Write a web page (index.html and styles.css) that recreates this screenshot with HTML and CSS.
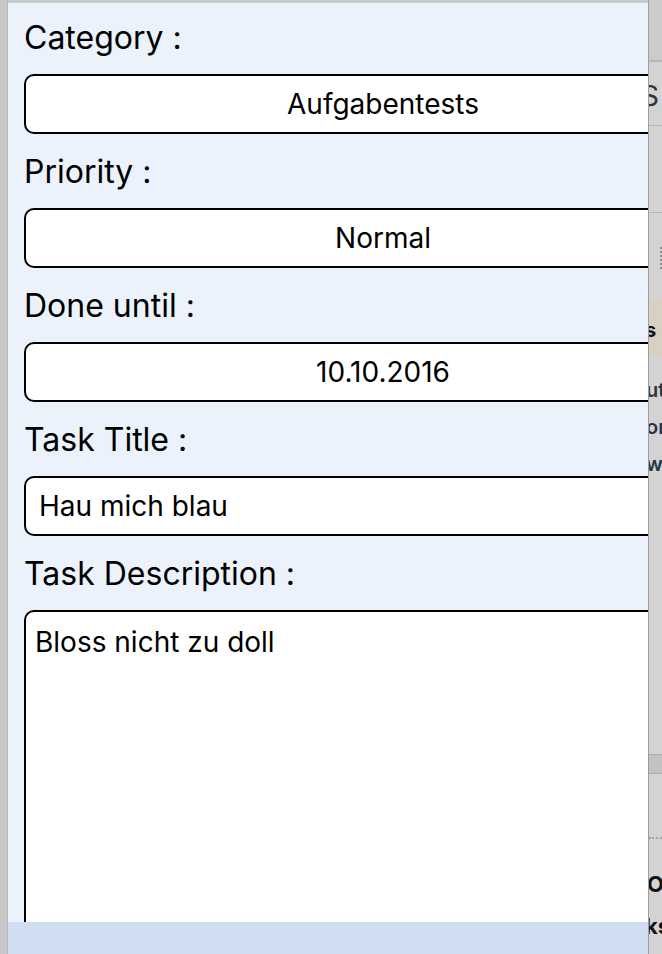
FILE: index.html
```html
<!DOCTYPE html>
<html lang="de">
<head>
    <meta charset="UTF-8">
    <meta name="viewport" content="width=device-width, initial-scale=1.0">
    <title>Task bearbeiten</title>
    <link rel="stylesheet" href="styles.css">
</head>
<body>
    <div class="screen">
        <div class="edge-left"></div>

        <div class="sheet">
            <form class="task-form" id="taskForm">
                <div class="field">
                    <label class="field-label" for="category">Category :</label>
                    <input class="field-box centered" type="text" id="category" value="Aufgabentests" readonly>
                </div>
                <div class="field">
                    <label class="field-label" for="priority">Priority :</label>
                    <input class="field-box centered" type="text" id="priority" value="Normal" readonly>
                </div>
                <div class="field">
                    <label class="field-label" for="doneUntil">Done until :</label>
                    <input class="field-box centered" type="text" id="doneUntil" value="10.10.2016" readonly>
                </div>
                <div class="field">
                    <label class="field-label" for="taskTitle">Task Title :</label>
                    <input class="field-box" type="text" id="taskTitle" value="Hau mich blau">
                </div>
                <div class="field">
                    <label class="field-label" for="taskDescription">Task Description :</label>
                    <textarea class="field-box area" id="taskDescription">Bloss nicht zu doll</textarea>
                </div>
            </form>
            <div class="sheet-footer"></div>
        </div>

        <div class="behind">
            <div class="behind-top"></div>
            <div class="behind-row tall"><span class="peek big">S</span></div>
            <div class="behind-row mid"></div>
            <div class="behind-row dots"><span class="dot-col"></span></div>
            <div class="behind-row beige"><span class="peek bold">s</span></div>
            <div class="behind-text">
                <span class="peek small cut">ut</span>
                <span class="peek small cut">or</span>
                <span class="peek small cut">wo</span>
            </div>
            <div class="behind-band"></div>
            <div class="behind-lower">
                <div class="dotted"></div>
                <span class="peek bold2 first">O</span>
                <span class="peek bold2 cut">ks</span>
                <span class="peek bold2 last">e</span>
            </div>
        </div>
    </div>
</body>
</html>
```

FILE: styles.css
```css
html, body {
    margin: 0;
    padding: 0;
}
body {
    font-family: 'Inter', 'Liberation Sans', sans-serif;
    background-color: #c9c9c9;
    color: #000;
    overflow: hidden;
}
.screen {
    display: flex;
    height: 954px;
    width: 662px;
}
.edge-left {
    width: 7px;
    background: #c9c9c9;
    border-right: 1px solid #b8b8b8;
}
.sheet {
    width: 640px;
    margin-top: 3px;
    display: flex;
    flex-direction: column;
    background: #ebf2fb;
    overflow: hidden;
}
.task-form {
    flex: 1;
    overflow: hidden;
    padding: 15px 0 0 16px;
}
.field {
    margin-bottom: 18px;
}
.field-label {
    display: block;
    font-size: 32px;
    line-height: 40px;
    margin-bottom: 16px;
    white-space: nowrap;
}
.field-box {
    display: block;
    box-sizing: border-box;
    width: 718px;
    height: 60px;
    border: 2px solid #000;
    border-radius: 10px;
    background: #fff;
    font-family: 'Inter', 'Liberation Sans', sans-serif;
    font-size: 28px;
    color: #000;
    padding: 0 13px;
    outline: none;
}
.centered {
    text-align: center;
}
.area {
    height: 360px;
    padding: 12px 9px;
    line-height: 36px;
    resize: none;
}
.sheet-footer {
    height: 32px;
    background: #cfdef0;
}

/* page behind the sheet */
.behind {
    width: 13px;
    border-left: 1px solid #9e9e9e;
    background: #d3d3d3;
    overflow: hidden;
    color: #2b3441;
}
.behind-top {
    height: 60px;
    background: #cbcbcb;
    border-bottom: 2px solid #b6b6b6;
}
.behind-row {
    display: flow-root;
    border-bottom: 1px solid #b6b6b6;
}
.behind-row.tall {
    height: 63px;
}
.behind-row.mid {
    height: 86px;
}
.behind-row.dots {
    height: 87px;
    border-bottom: none;
}
.dot-col {
    display: block;
    margin: 34px 0 0 11px;
    width: 2px;
    height: 22px;
    border-left: 2px dotted #8f8f8f;
}
.behind-row.beige {
    height: 56px;
    background: #d8d0c3;
    border-bottom: none;
}
.peek {
    display: block;
    white-space: nowrap;
    line-height: 1;
}
.big {
    font-size: 28px;
    margin: 20px 0 0 -8px;
}
.bold {
    font-weight: 700;
    font-size: 20px;
    color: #111;
    margin: 20px 0 0 -4px;
}
.behind-text {
    height: 398px;
    padding-top: 24px;
    box-sizing: border-box;
}
.small {
    font-size: 20px;
    font-weight: 600;
    margin-bottom: 17px;
}
.cut {
    margin-left: -3px;
}
.behind-band {
    height: 18px;
    background: #c2c2c2;
    border-top: 1px solid #acacac;
    border-bottom: 1px solid #acacac;
}
.behind-lower {
    display: flow-root;
}
.dotted {
    margin-top: 63px;
    border-top: 2px dotted #a5a5a5;
}
.bold2 {
    font-weight: 700;
    font-size: 22px;
    color: #111;
    margin-left: -4px;
}
.bold2.first {
    margin-top: 34px;
    margin-left: -2px;
}
.bold2.cut {
    margin-top: 20px;
}
.bold2.last {
    margin-top: 10px;
}
```
